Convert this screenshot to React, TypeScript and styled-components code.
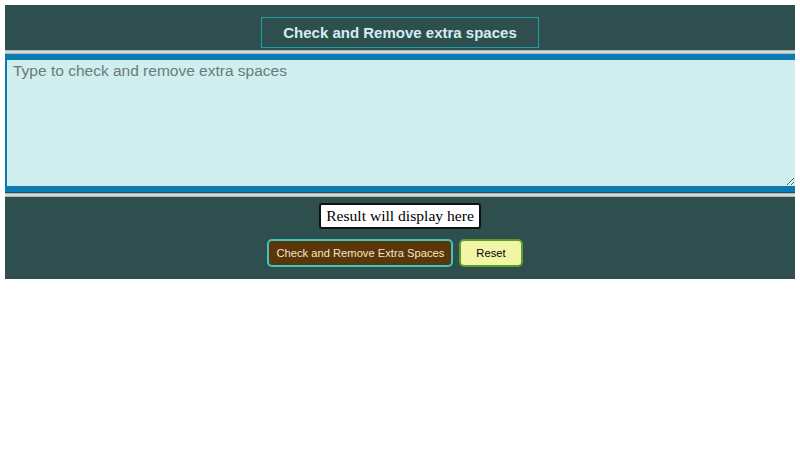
import * as React from 'react';
import styled, { createGlobalStyle } from 'styled-components';

const GlobalStyle = createGlobalStyle`
  body {
    margin: 5px;
    background: #ffffff;
    font-family: "Liberation Sans", Arial, sans-serif;
  }
`;

const Wrapper = styled.div`
  background-color: #2f4f4f;
  padding: 12px 0 12px;
  display: flex;
  flex-direction: column;
  align-items: center;
`;

const Heading = styled.div`
  border: 1px solid #20a0a8;
  width: 276px;
  height: 29px;
  display: flex;
  align-items: center;
  justify-content: center;
  color: #d2eef0;
  font-weight: bold;
  font-size: 15px;
`;

const Rule = styled.hr<{ $gap: number }>`
  width: 100%;
  height: 4px;
  margin: ${p => p.$gap}px 0 0;
  border: 0;
  background: linear-gradient(#9aa5a5, #e8eeee 50%, #9aa5a5);
`;

const Input = styled.textarea`
  box-sizing: border-box;
  width: calc(100% + 2px);
  align-self: flex-start;
  height: 138px;
  margin: 0;
  background: #d0eeee;
  border-style: solid;
  border-color: #0a7cb2;
  border-width: 6px 2px 6px 2px;
  padding: 2px 6px;
  font-family: "Liberation Sans", Arial, sans-serif;
  font-size: 15.5px;
  color: #333;
  outline: none;

  &::placeholder {
    color: #6a7b7b;
  }
`;

const Result = styled.div`
  margin-top: 6px;
  background: #ffffff;
  border: 2px solid #111;
  border-radius: 3px;
  padding: 2px 5px;
  font-family: "Liberation Serif", "Times New Roman", serif;
  font-size: 15.6px;
  line-height: 18px;
  color: #000;
`;

const ButtonRow = styled.div`
  display: flex;
  gap: 6px;
  margin-top: 10px;
  padding-right: 10px;
`;

const Button = styled.button<{ $variant: 'primary' | 'reset' }>`
  height: 28px;
  border-radius: 5px;
  border: 2px solid ${p => (p.$variant === 'primary' ? '#3cc8c0' : '#5e9c2c')};
  background: ${p => (p.$variant === 'primary' ? '#5a3608' : '#f2f4a6')};
  color: ${p => (p.$variant === 'primary' ? '#f6e6c8' : '#000')};
  font-family: "Liberation Sans", Arial, sans-serif;
  font-size: 11.2px;
  padding: 0 ${p => (p.$variant === 'primary' ? '7px' : '15px')};
  cursor: pointer;
`;

export default function App() {
  const [text, setText] = React.useState('');
  const [result, setResult] = React.useState('Result will display here');

  return (
    <>
      <GlobalStyle />
      <Wrapper>
        <Heading>Check and Remove extra spaces</Heading>
        <Rule $gap={2} />
        <Input
          placeholder="Type to check and remove extra spaces"
          value={text}
          onChange={e => setText(e.target.value)}
        />
        <Rule $gap={1} />
        <Result>{result}</Result>
        <ButtonRow>
          <Button $variant="primary" onClick={() => setResult(text.replace(/\s+/g, ' ').trim())}>
            Check and Remove Extra Spaces
          </Button>
          <Button
            $variant="reset"
            onClick={() => {
              setText('');
              setResult('Result will display here');
            }}
          >
            Reset
          </Button>
        </ButtonRow>
      </Wrapper>
    </>
  );
}
